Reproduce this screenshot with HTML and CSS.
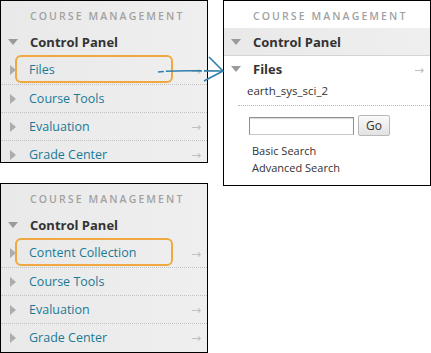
FILE: index.html
```html
<!DOCTYPE html>
<html lang="en">

<head>
    <meta charset="UTF-8">
    <title>Course Management</title>
    <link rel="stylesheet" href="styles.css">
</head>

<body>
    <div class="stage">
        <div class="left-col">
            <div class="panel panel-top">
                <div class="panel-title">COURSE MANAGEMENT</div>
                <div class="cp-row"><span class="tri-down"></span>Control Panel</div>
                <div class="item"><span class="tri-right"></span><span class="item-label hl">Files</span><span class="go-arrow">&rarr;</span></div>
                <div class="item"><span class="tri-right"></span><span class="item-label">Course Tools</span></div>
                <div class="item"><span class="tri-right"></span><span class="item-label">Evaluation</span><span class="go-arrow">&rarr;</span></div>
                <div class="item"><span class="tri-right"></span><span class="item-label">Grade Center</span><span class="go-arrow">&rarr;</span></div>
            </div>

            <div class="panel panel-bottom">
                <div class="panel-title">COURSE MANAGEMENT</div>
                <div class="cp-row"><span class="tri-down"></span>Control Panel</div>
                <div class="item"><span class="tri-right"></span><span class="item-label hl">Content Collection</span><span class="go-arrow">&rarr;</span></div>
                <div class="item"><span class="tri-right"></span><span class="item-label">Course Tools</span></div>
                <div class="item"><span class="tri-right"></span><span class="item-label">Evaluation</span><span class="go-arrow">&rarr;</span></div>
                <div class="item"><span class="tri-right"></span><span class="item-label">Grade Center</span><span class="go-arrow">&rarr;</span></div>
            </div>
        </div>

        <div class="panel panel-open">
            <div class="panel-title">COURSE MANAGEMENT</div>
            <div class="cp-row cp-open"><span class="tri-down"></span>Control Panel</div>
            <div class="files-body">
                <div class="files-head"><span class="tri-down"></span>Files<span class="go-arrow">&rarr;</span></div>
                <div class="folder">earth_sys_sci_2</div>
                <div class="search">
                    <input type="text" class="search-input">
                    <button class="go-btn">Go</button>
                </div>
                <div class="search-links">
                    <a href="#">Basic Search</a>
                    <a href="#">Advanced Search</a>
                </div>
            </div>
        </div>

        <!-- arrow from the closed menu to the opened one -->
        <svg class="pointer" width="80" height="40" viewBox="0 0 80 40">
            <path d="M2 22 C20 20 40 21 67 21" fill="none" stroke="#2f7fae" stroke-width="1.6" stroke-dasharray="6 2 30 0" />
            <path d="M53 7 L67 21 L48 31" fill="none" stroke="#2f7fae" stroke-width="1.6" />
        </svg>
    </div>
</body>

</html>
```

FILE: styles.css
```css
* {
    margin: 0;
    padding: 0;
    box-sizing: border-box;
}

body {
    width: 431px;
    height: 353px;
    overflow: hidden;
    background: #fff;
    font-family: "Open Sans", "DejaVu Sans", sans-serif;
}

.stage {
    display: flex;
    gap: 15px;
    position: relative;
}

.left-col {
    display: flex;
    flex-direction: column;
    gap: 20px;
    width: 208px;
}

.panel {
    width: 208px;
    border: 1px solid #000;
    background: linear-gradient(90deg, #e9e9e9, #efefef);
    overflow: hidden;
}

.panel-top {
    height: 163px;
}

.panel-bottom {
    height: 170px;
}

.panel-open {
    height: 186px;
    background: #fff;
}

.panel-title {
    height: 27px;
    padding: 8px 0 0 29px;
    font-size: 10.5px;
    letter-spacing: 2.1px;
    color: #a2a2a2;
    font-weight: 600;
}

.cp-row {
    height: 28px;
    display: flex;
    align-items: center;
    font-size: 13px;
    font-weight: 700;
    color: #333;
    padding-left: 7px;
}

.cp-open {
    background: linear-gradient(90deg, #e9e9e9, #efefef);
    border-bottom: 1px solid #d4d4d4;
}

.tri-down {
    width: 0;
    height: 0;
    border-left: 5px solid transparent;
    border-right: 5px solid transparent;
    border-top: 6px solid #9a9a9a;
    margin-right: 12px;
}

.tri-right {
    width: 0;
    height: 0;
    border-top: 5px solid transparent;
    border-bottom: 5px solid transparent;
    border-left: 6px solid #acacac;
    margin-right: 8px;
}

.item {
    height: 28px;
    display: flex;
    align-items: center;
    padding-left: 9px;
    border-top: 1px dotted #c2c2c2;
    font-size: 12.5px;
    color: #1a7a96;
}

.cp-row + .item {
    border-top: none;
}

.item-label {
    padding: 3px 6px 3px 12px;
    margin-left: -9px;
    border: 2px solid transparent;
    border-radius: 6px;
}

.item-label.hl {
    border-color: #f0a840;
    width: 158px;
    margin-top: -2px;
    padding-top: 4px;
}

.go-arrow {
    margin-left: auto;
    margin-right: 6px;
    color: #c0c0c0;
    font-size: 12px;
    font-weight: 400;
}

.files-body {
    padding-left: 7px;
}

.files-head {
    height: 26px;
    display: flex;
    align-items: center;
    font-size: 13px;
    font-weight: 700;
    color: #333;
}

.folder {
    font-size: 11.5px;
    color: #333;
    padding: 0 0 7px 9px;
    border-bottom: 1px dotted #b8b8b8;
    margin-left: 7px;
    margin-top: 1px;
}

.search {
    display: flex;
    align-items: center;
    gap: 4px;
    padding: 9px 0 0 18px;
}

.search-input {
    width: 105px;
    height: 18px;
    border: 1px solid #8f8f8f;
    border-bottom-color: #c8c8c8;
    box-shadow: inset 0 1px 1px rgba(0, 0, 0, 0.15);
}

.go-btn {
    width: 32px;
    height: 21px;
    border: 1px solid #b9b9b9;
    border-radius: 2px;
    background: linear-gradient(#fafafa, #e2e2e2);
    font-family: "Open Sans", "DejaVu Sans", sans-serif;
    font-size: 12px;
    color: #333;
}

.search-links {
    display: flex;
    flex-direction: column;
    padding: 7px 0 0 21px;
    gap: 1px;
}

.search-links a {
    font-size: 11px;
    color: #333;
    text-decoration: none;
    line-height: 16px;
}

.pointer {
    position: absolute;
    left: 156px;
    top: 50px;
}
```
